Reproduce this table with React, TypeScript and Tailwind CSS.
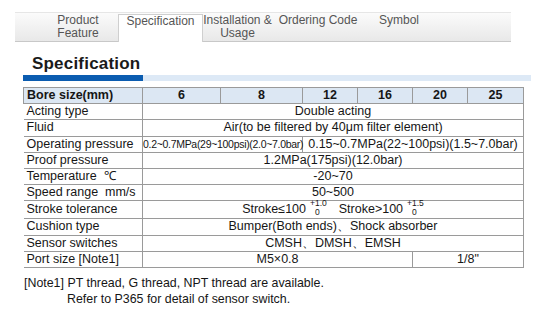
const tabs = [
  { label: ['Product', 'Feature'], w: 'w-[80px]' },
  { label: ['Specification'], w: 'w-[85px]', active: true },
  { label: ['Installation &', 'Usage'], w: 'w-[69px]' },
  { label: ['Ordering Code'], w: 'w-[92px]' },
  { label: ['Symbol'], w: 'w-[70px]' },
]

const bores = ['6', '8', '12', '16', '20', '25']

function Tol({ up }: { up: string }) {
  return (
    <span className="inline-flex flex-col items-start align-middle ml-[4px] text-[8.5px] leading-[8.5px] relative -top-[2px]">
      <span>{up}</span>
      <span className="pl-[5px]">0</span>
    </span>
  )
}

type Row = { label: string; cells: { span: number; content: React.ReactNode; cls?: string }[] }

const rows: Row[] = [
  { label: 'Acting type', cells: [{ span: 6, content: 'Double acting' }] },
  { label: 'Fluid', cells: [{ span: 6, content: 'Air(to be filtered by 40μm filter element)' }] },
  {
    label: 'Operating pressure',
    cells: [
      { span: 2, content: '0.2~0.7MPa(29~100psi)(2.0~7.0bar)', cls: 'text-[10.5px] tracking-[-0.3px]' },
      { span: 4, content: '0.15~0.7MPa(22~100psi)(1.5~7.0bar)' },
    ],
  },
  { label: 'Proof pressure', cells: [{ span: 6, content: '1.2MPa(175psi)(12.0bar)' }] },
  { label: 'Temperature  ℃', cells: [{ span: 6, content: '-20~70' }] },
  { label: 'Speed range  mm/s', cells: [{ span: 6, content: '50~500' }] },
  {
    label: 'Stroke tolerance',
    cells: [
      {
        span: 6,
        content: (
          <span>
            Stroke≤100<Tol up="+1.0" />
            <span className="ml-[12px]">Stroke&gt;100</span>
            <Tol up="+1.5" />
          </span>
        ),
      },
    ],
  },
  { label: 'Cushion type', cells: [{ span: 6, content: 'Bumper(Both ends)、Shock absorber' }] },
  { label: 'Sensor switches', cells: [{ span: 6, content: 'CMSH、DMSH、EMSH' }] },
  {
    label: 'Port size [Note1]',
    cells: [
      { span: 4, content: 'M5×0.8' },
      { span: 2, content: '1/8"' },
    ],
  },
]

export default function App() {
  return (
    <div className="w-[542px] h-[320px] bg-white overflow-hidden" style={{ fontFamily: '"Liberation Sans", Arial, sans-serif' }}>
      <div className="pt-[12px] pl-[15px]">
        <div className="w-[496px] h-[30px] border-t border-b border-t-[#e6e6e6] border-b-[#c8c8c8] bg-gradient-to-b from-[#fbfbfb] to-[#e8e8e8] flex items-end pl-[23px]">
          {tabs.map((t) => (
            <div
              key={t.label[0]}
              className={`${t.w} h-full flex flex-col items-center text-[12px] leading-[13px] whitespace-nowrap text-[#555] ${
                t.active
                  ? 'bg-white border border-b-0 border-[#cfcfcf] h-[25px] -mb-px text-[#222] pt-[0px]'
                  : 'pt-[1px]'
              }`}
            >
              {t.label.map((l) => (
                <span key={l}>{l}</span>
              ))}
            </div>
          ))}
        </div>
      </div>

      <div className="pl-[32px] pt-[12px] text-[17px] leading-[20px] font-bold text-[#1a1a1a] tracking-[0.2px]">
        Specification
      </div>
      <div className="ml-[23px] mt-[1px] flex h-[6px] w-[508px]">
        <div className="w-[120px] bg-[#0b5cb0]" />
        <div className="flex-1 bg-[#dde9f6]" />
      </div>

      <div className="ml-[23px] mt-[6px] w-[500px] text-[12.5px] text-[#161616]">
        <table className="border-collapse table-fixed w-[500px]">
          <colgroup>
            <col className="w-[119px]" />
            <col className="w-[78px]" />
            <col className="w-[82px]" />
            <col className="w-[55px]" />
            <col className="w-[55px]" />
            <col className="w-[55px]" />
            <col className="w-[56px]" />
          </colgroup>
          <tbody>
            <tr className="h-[16.2px] bg-[#dce7f3] font-bold">
              <td className="border border-[#9a9a9a] pl-[3px] leading-[15px] p-0">Bore size(mm)</td>
              {bores.map((b) => (
                <td key={b} className="border border-[#9a9a9a] text-center leading-[15px] p-0">
                  {b}
                </td>
              ))}
            </tr>
            {rows.map((r) => (
              <tr key={r.label} className="h-[16.2px]">
                <td className="border-b border-r border-[#9a9a9a] pl-[3px] leading-[15px] p-0 whitespace-pre">{r.label}</td>
                {r.cells.map((c, i) => (
                  <td
                    key={i}
                    colSpan={c.span}
                    className={`border-b border-r border-[#9a9a9a] text-center leading-[15px] p-0 whitespace-nowrap ${c.cls ?? ''}`}
                  >
                    {c.content}
                  </td>
                ))}
              </tr>
            ))}
          </tbody>
        </table>
      </div>

      <div className="ml-[24px] mt-[7px] text-[12.4px] leading-[16px] text-[#161616]">
        <div>[Note1] PT thread, G thread, NPT thread are available.</div>
        <div className="pl-[43px]">Refer to P365 for detail of sensor switch.</div>
      </div>
    </div>
  )
}
